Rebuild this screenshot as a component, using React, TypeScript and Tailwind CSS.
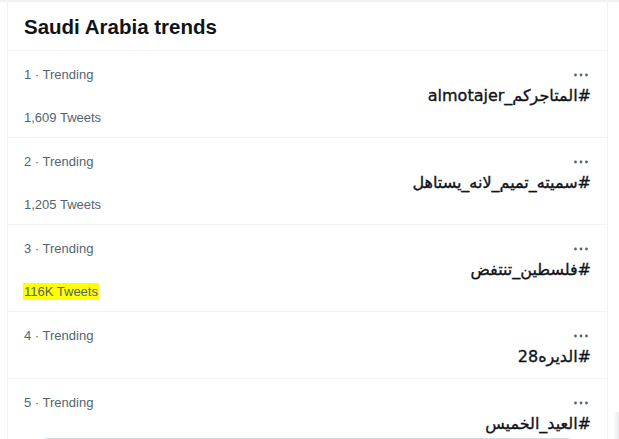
import React from "react";

type Trend = { rank: number; tag: string; count?: string; highlight?: boolean };

const trends: Trend[] = [
  { rank: 1, tag: "#المتاجركم_almotajer", count: "1,609 Tweets" },
  { rank: 2, tag: "#سميته_تميم_لانه_يستاهل", count: "1,205 Tweets" },
  { rank: 3, tag: "#فلسطين_تنتفض", count: "116K Tweets", highlight: true },
  { rank: 4, tag: "#الديره28" },
  { rank: 5, tag: "#العيد_الخميس" },
];

function MoreIcon() {
  return (
    <svg width="16" height="6" viewBox="0 0 16 6" className="text-[#536471]">
      <circle cx="2.5" cy="3" r="1.4" fill="currentColor" />
      <circle cx="8" cy="3" r="1.4" fill="currentColor" />
      <circle cx="13.5" cy="3" r="1.4" fill="currentColor" />
    </svg>
  );
}

function Row({ t, last }: { t: Trend; last: boolean }) {
  return (
    <div className={`flex flex-col px-4 pt-[14px] pb-[10px] ${last ? "" : "border-b border-[#eff3f4]"}`}>
      <div className="flex h-5 items-center justify-between">
        <span className="text-[13px] leading-5 text-[#536471]">{t.rank} · Trending</span>
        <span className="mr-[2px] flex items-center"><MoreIcon /></span>
      </div>
      <div
        dir="rtl"
        className="h-[22px] text-right text-[16px] font-normal leading-[22px] text-[#0f1419] [-webkit-text-stroke:0.35px_#0f1419]"
        style={{ fontFamily: '"DejaVu Sans", "Liberation Sans", sans-serif' }}
      >
        {t.tag}
      </div>
      {t.count && (
        <div className="flex h-5 items-center">
          <span
            className={`text-[13px] leading-[17px] text-[#536471] ${t.highlight ? "-ml-[1px] bg-[#ffff00] px-[1px] text-[#4a5560]" : ""}`}
          >
            {t.count}
          </span>
        </div>
      )}
      {last && (
        <div className="mx-2 mt-[3px] h-6 rounded-t-2xl border border-[#cfd9de]" />
      )}
    </div>
  );
}

export default function App() {
  return (
    <div
      className="relative h-[439px] w-[619px] overflow-hidden bg-white"
      style={{ fontFamily: '"Liberation Sans", Arial, sans-serif' }}
    >
      <div className="h-[2px] w-full bg-[#eff3f4]" />
      <div className="ml-[7px] w-[601px] border-x border-[#eff3f4] bg-white">
        <div className="flex h-[49px] items-center border-b border-[#eff3f4] px-4">
          <h2 className="mt-[1px] text-[20.5px] font-bold leading-6 text-[#0f1419]">Saudi Arabia trends</h2>
        </div>
        {trends.map((t, i) => (
          <Row key={t.rank} t={t} last={i === trends.length - 1} />
        ))}
      </div>
      <div className="absolute right-0 top-[412px] h-[27px] w-[6px] bg-gradient-to-r from-white to-[#e6e9eb]" />
    </div>
  );
}
